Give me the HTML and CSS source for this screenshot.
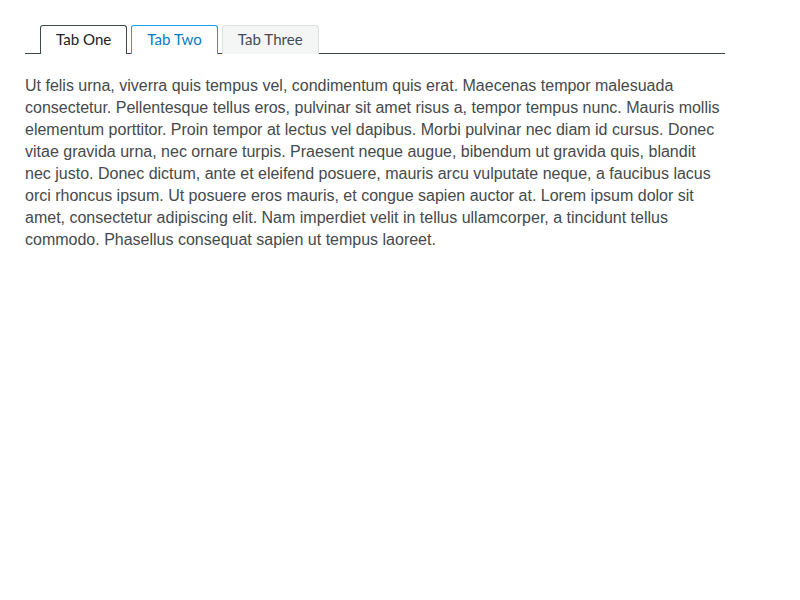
FILE: index.html
```html
<!DOCTYPE html>
<html>
<head>
<meta charset="utf-8">
<link rel="stylesheet" href="styles.css">
</head>
<body>
<div class="page">
  <div class="tabs">
    <div class="tab active">Tab One</div>
    <div class="tab hover">Tab Two</div>
    <div class="tab">Tab Three</div>
  </div>
  <p class="content">Ut felis urna, viverra quis tempus vel, condimentum quis erat. Maecenas tempor malesuada consectetur. Pellentesque tellus eros, pulvinar sit amet risus a, tempor tempus nunc. Mauris mollis elementum porttitor. Proin tempor at lectus vel dapibus. Morbi pulvinar nec diam id cursus. Donec vitae gravida urna, nec ornare turpis. Praesent neque augue, bibendum ut gravida quis, blandit nec justo. Donec dictum, ante et eleifend posuere, mauris arcu vulputate neque, a faucibus lacus orci rhoncus ipsum. Ut posuere eros mauris, et congue sapien auctor at. Lorem ipsum dolor sit amet, consectetur adipiscing elit. Nam imperdiet velit in tellus ullamcorper, a tincidunt tellus commodo. Phasellus consequat sapien ut tempus laoreet.</p>
</div>
</body>
</html>
```
FILE: styles.css
```css
html, body { margin: 0; padding: 0; background: #fff; }
.page { padding: 25px 25px 0 25px; width: 700px; }
.tabs {
  display: flex;
  gap: 4px;
  padding-left: 15px;
  border-bottom: 1px solid #3d4a4a;
  height: 28px;
}
.tab {
  box-sizing: border-box;
  height: 29px;
  padding: 0 15px;
  border: 1px solid #dde1e1;
  border-bottom: none;
  border-radius: 3px 3px 0 0;
  background: #f4f6f6;
  color: #444b4f;
  font-family: Lato, sans-serif;
  font-size: 15.1px;
  line-height: 27px;
}
.tab.active {
  background: #fff;
  border-color: #3d4a4a;
  color: #222;
}
.tab.hover {
  background: #fff;
  border-color: #1ba1e2;
  color: #0c78c8;
}
.content {
  margin: 21px 0 0 0;
  font-family: "Liberation Sans", Arial, sans-serif;
  font-size: 16px;
  line-height: 22px;
  color: #454a4c;
}
```
